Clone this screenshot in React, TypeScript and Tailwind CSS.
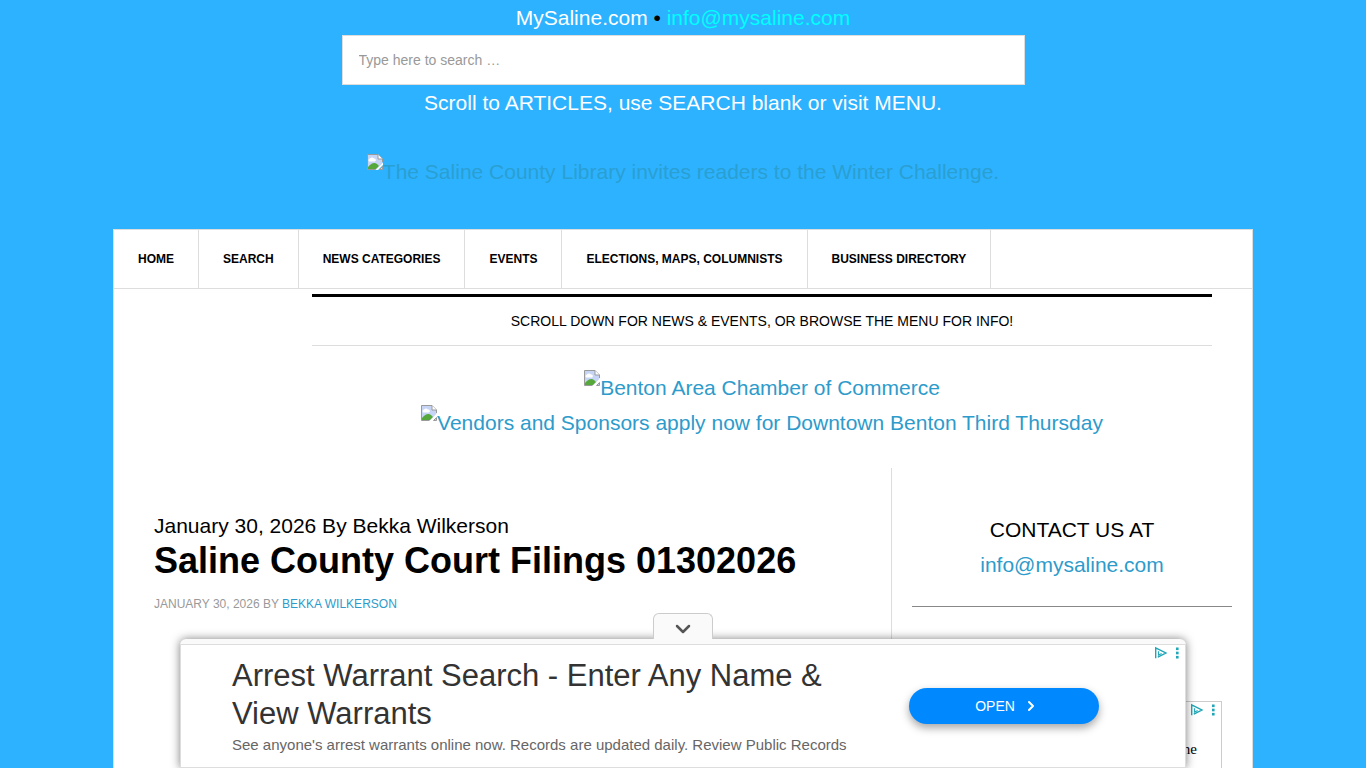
import { ChevronDown, ChevronRight } from "lucide-react";

const menuItems = [
  "Home",
  "Search",
  "News Categories",
  "Events",
  "Elections, Maps, Columnists",
  "Business Directory",
];

function BrokenImage({ alt }: { alt: string }) {
  return (
    <span className="flex items-start">
      <svg width="16" height="16" viewBox="0 0 16 16" className="shrink-0" aria-hidden="true">
        <path d="M0.5 0.5H11L15.5 5V9L9 15.5H0.5Z" fill="#c6d5f5" />
        <path d="M2 7.5a2 2 0 0 1 1-3 2.5 2.5 0 0 1 4 0 1.6 1.6 0 0 1 1 3Z" fill="#fff" />
        <path d="M1 15V13Q6 7 10 10L12 12L9 15Z" fill="#56a83c" />
        <path d="M0.5 15.5V0.5H11L15.5 5V8M0.5 15.5H8.5" fill="none" stroke="#9a9a9a" />
        <path d="M11 0.5V5H15.5" fill="#fff" stroke="#9a9a9a" />
        <path d="M8.5 16L16 8.5V11L11 16Z" fill="#fff" />
        <path d="M12.5 15.5H15.5V12.5Z" fill="#c6d5f5" stroke="#9a9a9a" />
      </svg>
      <span>{alt}</span>
    </span>
  );
}

function AdChoices() {
  return (
    <div className="flex items-center gap-1 pt-px">
      <button type="button" aria-label="AdChoices">
        <svg width="14" height="14" viewBox="0 0 14 14" fill="none" stroke="#1fa6b8" strokeWidth="1.4">
          <path d="M2.7 12.2V1.8L12.8 7L4.8 11.2" />
          <path d="M5.6 5.2V9.2L8.6 7.6" strokeWidth="1.1" />
        </svg>
      </button>
      <button type="button" aria-label="Ad options">
        <svg width="14" height="14" viewBox="0 0 14 14" fill="#1fa6b8">
          <rect x="5" y="1.5" width="2.6" height="2.6" />
          <rect x="5" y="5.7" width="2.6" height="2.6" />
          <rect x="5" y="9.9" width="2.6" height="2.6" />
        </svg>
      </button>
    </div>
  );
}

function SiteTop() {
  return (
    <header className="flex flex-col items-center text-center text-white">
      <p>
        MySaline.com <span className="text-black">•</span>{" "}
        <a href="mailto:info@mysaline.com" className="text-[#0ff]">
          info@mysaline.com
        </a>
      </p>
      <form role="search" className="flex w-full justify-center">
        <input
          type="search"
          aria-label="Type here to search"
          placeholder="Type here to search …"
          className="h-[50px] w-1/2 border border-[#ddd] bg-white px-4 text-sm text-[#999] placeholder:text-[#999]"
        />
      </form>
      <p>Scroll to ARTICLES, use SEARCH blank or visit MENU.</p>
      <a href="#library" className="mt-[34px] mb-10 text-[#2a9fd2]">
        <BrokenImage alt="The Saline County Library invites readers to the Winter Challenge." />
      </a>
    </header>
  );
}

function MainMenu() {
  return (
    <nav className="border-b border-[#ddd]">
      <ul className="flex flex-wrap">
        {menuItems.map((item) => (
          <li key={item} className="border-r border-[#ddd]">
            <a href="#menu" className="block px-6 py-5 text-xs leading-[18px] font-bold text-black uppercase">
              {item}
            </a>
          </li>
        ))}
      </ul>
    </nav>
  );
}

function Sidebar() {
  return (
    <aside className="flex w-[361px] shrink-0 flex-col border-l border-[#ddd] px-5 pt-11 text-center">
      <p>CONTACT US AT</p>
      <a href="mailto:info@mysaline.com" className="text-[#2d9bcb]">
        info@mysaline.com
      </a>
      <hr className="mt-6 border-[#888]" />
      <div className="mx-auto mt-[94px] flex w-[300px] grow flex-col items-end border border-b-0 border-[#ccc]">
        <AdChoices />
        <p className="pt-[22px] pr-6 font-['Liberation_Serif',serif] text-[15px] leading-5 text-black">
          Search online
        </p>
      </div>
    </aside>
  );
}

function AnchorAd() {
  return (
    <div className="fixed inset-x-0 bottom-0 flex flex-col items-center">
      <button
        type="button"
        aria-label="Collapse ad"
        className="z-10 flex h-[26px] w-[60px] items-center justify-center rounded-t-md border border-b-0 border-[#ccc] bg-[#fafafa] text-[#555]"
      >
        <ChevronDown size={24} strokeWidth={2.5} className="mt-1" />
      </button>
      <div className="w-full max-w-[1006px] rounded-t-md bg-[#fafafa] pt-[5px] shadow-[0_0_10px_rgba(0,0,0,0.5)]">
        <div className="flex items-start border border-[#ddd] bg-white">
          <div className="flex grow items-center justify-between pl-[51px]">
            <div className="w-[640px] pt-3 pb-[10px]">
              <h2 className="text-[31px] leading-[38px] text-[#333]">
                Arrest Warrant Search - Enter Any Name & View Warrants
              </h2>
              <p className="text-[15px] leading-6 text-[#666]">
                See anyone's arrest warrants online now. Records are updated daily. Review Public Records
              </p>
            </div>
            <button
              type="button"
              className="mr-[54px] flex h-9 w-[190px] items-center justify-center gap-2 rounded-full bg-[#0088ff] pl-1.5 text-sm text-white shadow-[0_4px_8px_rgba(0,0,0,0.35)]"
            >
              OPEN
              <ChevronRight size={16} strokeWidth={3} />
            </button>
          </div>
          <AdChoices />
        </div>
      </div>
    </div>
  );
}

export default function App() {
  return (
    <div className="flex min-h-screen flex-col bg-[#2db2ff] font-['Liberation_Sans',Arial,sans-serif] text-[21px] leading-[35px] text-black">
      <SiteTop />
      <div className="mx-auto flex w-full max-w-[1140px] grow flex-col border border-b-0 border-[#ddd] bg-white">
        <MainMenu />
        <section className="mt-[5px] mr-10 ml-auto w-full max-w-[900px] text-center">
          <p className="border-t-3 border-b border-t-black border-b-[#ddd] py-3 text-sm leading-6 uppercase">
            Scroll down for news & events, or browse the menu for info!
          </p>
          <div className="mt-6 flex flex-col items-center text-[#2d9bcb]">
            <a href="#chamber">
              <BrokenImage alt="Benton Area Chamber of Commerce" />
            </a>
            <a href="#third-thursday">
              <BrokenImage alt="Vendors and Sponsors apply now for Downtown Benton Third Thursday" />
            </a>
          </div>
        </section>
        <div className="mt-7 flex grow">
          <main className="grow pt-10 pl-10">
            <p>January 30, 2026 By Bekka Wilkerson</p>
            <h1 className="text-4xl leading-[35px] font-bold">Saline County Court Filings 01302026</h1>
            <p className="mt-4 text-xs leading-5 text-[#999] uppercase">
              January 30, 2026 by{" "}
              <a href="#author" className="text-[#2d9bcb]">
                Bekka Wilkerson
              </a>
            </p>
          </main>
          <Sidebar />
        </div>
      </div>
      <AnchorAd />
    </div>
  );
}
